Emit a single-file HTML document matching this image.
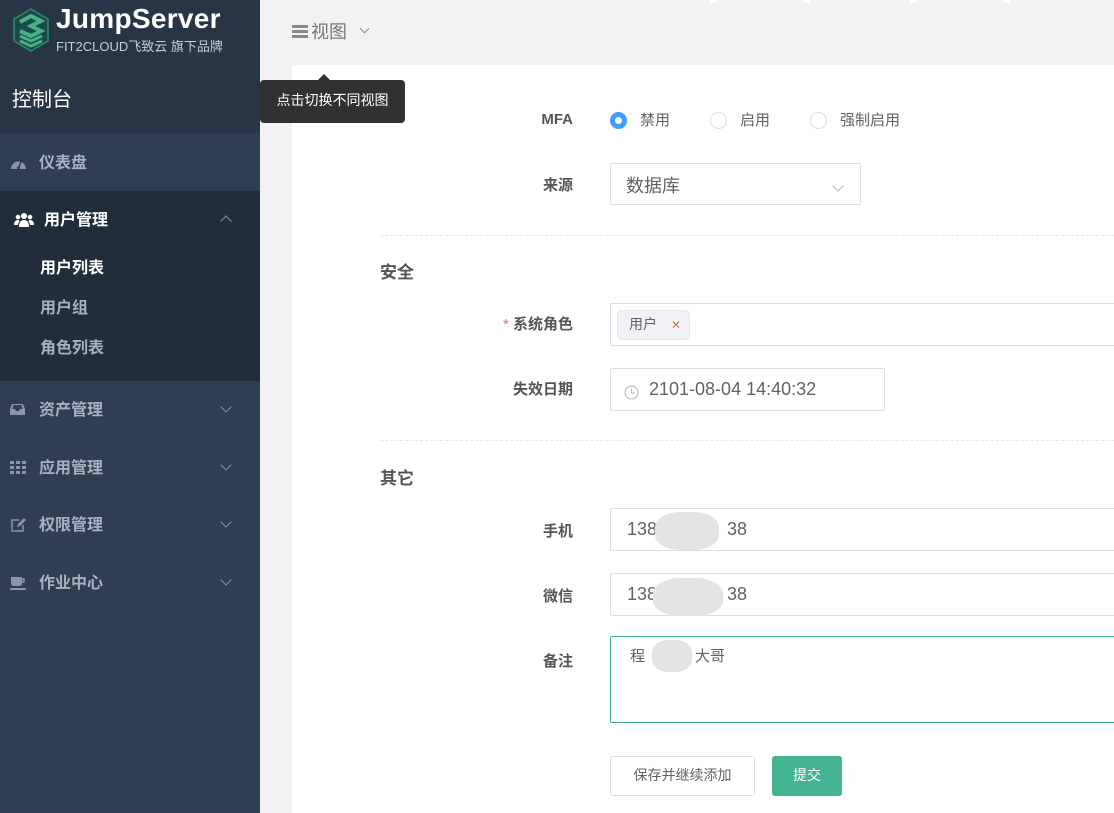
<!DOCTYPE html>
<html><head><meta charset="utf-8">
<style>
*{margin:0;padding:0;box-sizing:border-box}
body{width:1114px;height:813px;overflow:hidden;background:#f2f2f2;font-family:"Liberation Sans","Noto Sans CJK SC",sans-serif;position:relative}
.side{position:absolute;left:0;top:0;width:260px;height:813px;background:#2f3e50}
.top{position:absolute;left:0;top:0;width:260px;height:133px;background:#283545}
.abs{position:absolute}
.menu{color:#a7b1c2;font-size:16px;font-weight:bold}
.chev{position:absolute;left:222px;width:8px;height:8px;border-right:1px solid #8a96a8;border-bottom:1px solid #8a96a8;transform:rotate(45deg)}
.card{position:absolute;left:292px;top:65px;width:822px;height:748px;background:#fff}
.lbl{position:absolute;font-size:15px;font-weight:bold;color:#555;text-align:right;width:120px;left:453px}
.inp{position:absolute;border:1px solid #dcdfe6;background:#fff;border-radius:2px}
.txt{font-size:18px;color:#606266}
.hr{position:absolute;left:380px;width:734px;border-top:1px dashed #e7e7e7}
.sec{position:absolute;left:380px;font-size:17px;font-weight:bold;color:#555}
.radio{position:absolute;width:17px;height:17px;border-radius:50%;border:1px solid #dcdfe6;background:#fff}
.rt{position:absolute;font-size:15px;color:#606266}
.blur{position:absolute;background:#e4e4e4;border-radius:40%;}
</style></head><body>
<div class="side"></div>
<div class="top"></div>
<svg class="abs" style="left:11px;top:7px" width="40" height="46" viewBox="0 0 40 46">
<polygon points="20,2 37,12 37,34 20,44 3,34 3,12" fill="#1d4a48" stroke="#2f8a6e" stroke-width="1.5"/>
<path d="M9,15 L20,9 L30,14 L20,19 L30,24 L20,29 L9,24" fill="none" stroke="#46b187" stroke-width="4"/>
<path d="M9,29 L20,34 L31,29 M9,34 L20,39 L31,34" fill="none" stroke="#46b187" stroke-width="3"/>
</svg>
<div class="abs" style="left:56px;top:3px;font-size:28px;font-weight:bold;color:#fff;letter-spacing:0.3px">JumpServer</div>
<div class="abs" style="left:56px;top:36px;font-size:13px;color:#c9ced6">FIT2CLOUD飞致云 旗下品牌</div>
<div class="abs" style="left:12px;top:83px;font-size:20px;color:#fff">控制台</div>
<div class="abs" style="left:0;top:133px;width:260px;height:58px;background:#2f3e50"></div>
<div class="abs" style="left:0;top:191px;width:260px;height:190px;background:#222d3c"></div>
<svg class="abs" style="left:10px;top:156px" width="17" height="14" viewBox="0 0 17 14"><path d="M1,13 A7.5,7.5 0 1 1 16,13 Z" fill="#8a96a8"/><path d="M8.5,12 L11,6" stroke="#2f3e50" stroke-width="1.5"/><circle cx="8.5" cy="12" r="1.5" fill="#2f3e50"/></svg>
<div class="abs menu" style="left:39px;top:149px">仪表盘</div>
<svg class="abs" style="left:14px;top:212px" width="20" height="16" viewBox="0 0 20 16"><circle cx="10" cy="4" r="3" fill="#fff"/><circle cx="4" cy="5" r="2.3" fill="#fff"/><circle cx="16" cy="5" r="2.3" fill="#fff"/><path d="M5,15 Q5,8 10,8 Q15,8 15,15Z M0,13 Q0,8 4,8 Q5,8 5.5,9 Q4,11 4,13Z M20,13 Q20,8 16,8 Q15,8 14.5,9 Q16,11 16,13Z" fill="#fff"/></svg>
<div class="abs menu" style="left:44px;top:206px;color:#fff">用户管理</div>
<div class="chev" style="top:217px;transform:rotate(225deg)"></div>
<div class="abs menu" style="left:40px;top:254px;color:#fff">用户列表</div>
<div class="abs menu" style="left:40px;top:294px">用户组</div>
<div class="abs menu" style="left:40px;top:334px">角色列表</div>
<svg class="abs" style="left:10px;top:403px" width="15" height="12" viewBox="0 0 15 12"><path d="M2,1 H13 L15,6 V12 H0 V6 Z" fill="#8a96a8"/><path d="M2.5,6 H5 L6,8 H9 L10,6 H12.5 L11.5,2 H3.5Z" fill="#2f3e50"/></svg>
<div class="abs menu" style="left:39px;top:396px">资产管理</div><div class="chev" style="top:403px"></div>
<svg class="abs" style="left:10px;top:461px" width="16" height="13" viewBox="0 0 16 13"><g fill="#8a96a8"><rect x="0" y="0" width="4" height="3"/><rect x="6" y="0" width="4" height="3"/><rect x="12" y="0" width="4" height="3"/><rect x="0" y="5" width="4" height="3"/><rect x="6" y="5" width="4" height="3"/><rect x="12" y="5" width="4" height="3"/><rect x="0" y="10" width="4" height="3"/><rect x="6" y="10" width="4" height="3"/><rect x="12" y="10" width="4" height="3"/></g></svg>
<div class="abs menu" style="left:39px;top:454px">应用管理</div><div class="chev" style="top:461px"></div>
<svg class="abs" style="left:10px;top:518px" width="16" height="14" viewBox="0 0 16 14"><path d="M9,2 H2 V13 H13 V7" fill="none" stroke="#8a96a8" stroke-width="1.5"/><path d="M7,9 L8,6 L14,0 L16,2 L10,8Z" fill="#8a96a8"/></svg>
<div class="abs menu" style="left:39px;top:511px">权限管理</div><div class="chev" style="top:518px"></div>
<svg class="abs" style="left:10px;top:576px" width="17" height="14" viewBox="0 0 17 14"><path d="M1,1 H12 V7 Q12,10 9,10 H4 Q1,10 1,7Z" fill="#8a96a8"/><path d="M12,3 H14 V6 H12" fill="none" stroke="#8a96a8" stroke-width="1.5"/><rect x="0" y="12" width="16" height="2" fill="#8a96a8"/></svg>
<div class="abs menu" style="left:39px;top:569px">作业中心</div><div class="chev" style="top:576px"></div>

<svg class="abs" style="left:292px;top:25px" width="16" height="13" viewBox="0 0 16 13"><g fill="#888"><rect y="0" width="16" height="3"/><rect y="5" width="16" height="3"/><rect y="10" width="16" height="3"/></g></svg>
<div class="abs" style="left:311px;top:18px;font-size:18px;color:#777">视图</div>
<div class="abs" style="left:361px;top:25px;width:7px;height:7px;border-right:1px solid #888;border-bottom:1px solid #888;transform:rotate(45deg)"></div>
<div class="abs" style="left:710px;top:0;width:6px;height:3px;background:#fff"></div>
<div class="abs" style="left:804px;top:0;width:6px;height:3px;background:#fff"></div>
<div class="abs" style="left:910px;top:0;width:6px;height:3px;background:#fff"></div>
<div class="abs" style="left:1004px;top:0;width:6px;height:3px;background:#fff"></div>

<div class="card"></div>
<div class="abs" style="left:260px;top:80px;width:145px;height:43px;background:#303133;border-radius:4px;color:#fff;font-size:14px;line-height:41px;text-align:center">点击切换不同视图</div>
<div class="abs" style="left:318px;top:74px;width:0;height:0;border-left:6px solid transparent;border-right:6px solid transparent;border-bottom:6px solid #303133"></div>

<div class="lbl" style="top:111px">MFA</div>
<div class="radio" style="left:610px;top:112px;border:5px solid #409eff"></div>
<div class="rt" style="left:640px;top:109px">禁用</div>
<div class="radio" style="left:710px;top:112px"></div>
<div class="rt" style="left:740px;top:109px">启用</div>
<div class="radio" style="left:810px;top:112px"></div>
<div class="rt" style="left:840px;top:109px">强制启用</div>

<div class="lbl" style="top:174px">来源</div>
<div class="inp" style="left:610px;top:163px;width:251px;height:42px"><span class="txt abs" style="left:15px;top:8px">数据库</span></div>
<div class="abs" style="left:834px;top:182px;width:8px;height:8px;border-right:1px solid #b4b8bf;border-bottom:1px solid #b4b8bf;transform:rotate(45deg)"></div>
<div class="hr" style="top:235px"></div>
<div class="sec" style="top:258px">安全</div>

<div class="lbl" style="top:313px"><span style="color:#f56c6c;font-weight:normal">* </span>系统角色</div>
<div class="inp" style="left:610px;top:303px;width:510px;height:43px"></div>
<div class="abs" style="left:617px;top:310px;width:73px;height:30px;background:#f0f2f5;border:1px solid #e4e7ed;border-radius:4px;font-size:14px;color:#606266;line-height:26px;padding-left:11px">用户<span style="color:#e6704a;margin-left:14px;font-size:12px">✕</span></div>

<div class="lbl" style="top:378px">失效日期</div>
<div class="inp" style="left:610px;top:368px;width:275px;height:43px"><span class="txt abs" style="left:38px;top:10px">2101-08-04 14:40:32</span></div>
<svg class="abs" style="left:624px;top:385px" width="15" height="15" viewBox="0 0 15 15"><circle cx="7.5" cy="7.5" r="6.5" fill="none" stroke="#b4b8bf"/><path d="M7.5,3.5 V8 H11" fill="none" stroke="#b4b8bf"/></svg>
<div class="hr" style="top:440px"></div>
<div class="sec" style="top:464px">其它</div>

<div class="lbl" style="top:520px">手机</div>
<div class="inp" style="left:610px;top:508px;width:510px;height:43px"><span class="txt abs" style="left:16px;top:10px">138&nbsp;&nbsp;&nbsp;&nbsp;&nbsp;&nbsp;&nbsp;&nbsp;&nbsp;&nbsp;&nbsp;&nbsp;&nbsp;&nbsp;38</span></div>
<div class="blur" style="left:655px;top:512px;width:64px;height:38px"></div>
<div class="lbl" style="top:585px">微信</div>
<div class="inp" style="left:610px;top:573px;width:510px;height:43px"><span class="txt abs" style="left:16px;top:10px">138&nbsp;&nbsp;&nbsp;&nbsp;&nbsp;&nbsp;&nbsp;&nbsp;&nbsp;&nbsp;&nbsp;&nbsp;&nbsp;&nbsp;38</span></div>
<div class="blur" style="left:653px;top:578px;width:70px;height:38px"></div>
<div class="lbl" style="top:650px">备注</div>
<div class="inp" style="left:610px;top:636px;width:510px;height:87px;border-color:#3fb28f"><span class="abs" style="left:19px;top:8px;font-size:15px;color:#606266">程&nbsp;&nbsp;&nbsp;&nbsp;&nbsp;&nbsp;&nbsp;&nbsp;&nbsp;&nbsp;&nbsp;&nbsp;大哥</span></div>
<div class="blur" style="left:652px;top:640px;width:40px;height:32px"></div>

<div class="abs" style="left:610px;top:756px;width:145px;height:40px;border:1px solid #dcdfe6;border-radius:3px;background:#fff;font-size:14px;color:#606266;text-align:center;line-height:36px">保存并继续添加</div>
<div class="abs" style="left:772px;top:756px;width:70px;height:40px;background:#43b391;border-radius:3px;font-size:14px;color:#fff;text-align:center;line-height:38px">提交</div>
</body></html>
